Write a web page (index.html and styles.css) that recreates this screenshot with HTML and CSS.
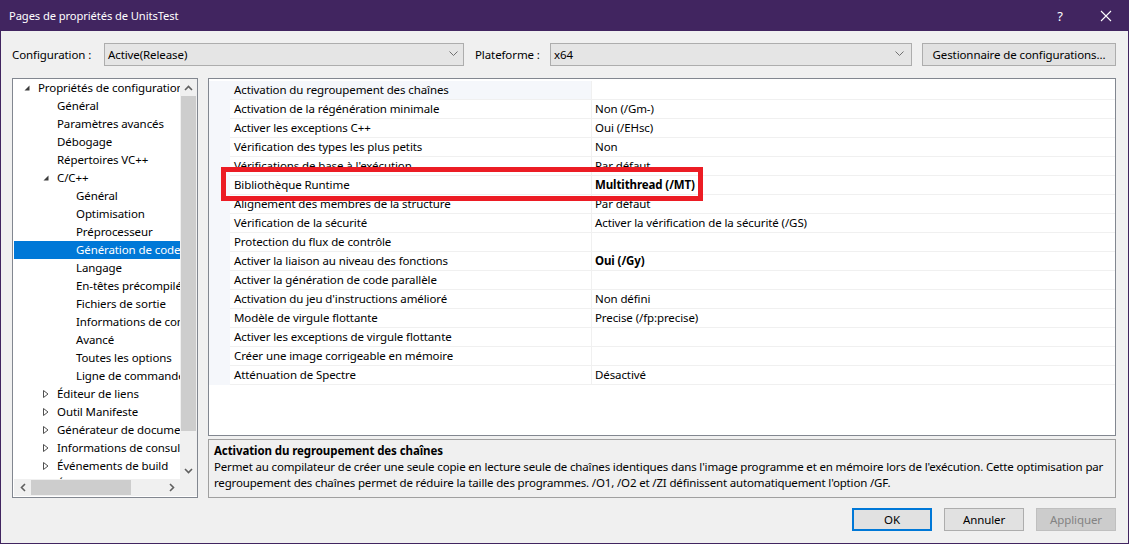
FILE: index.html
```html
<!DOCTYPE html>
<html lang="fr">
<head>
<meta charset="utf-8">
<title>Pages de propriétés de UnitsTest</title>
<link rel="stylesheet" href="styles.css">
</head>
<body>
<div class="window">
  <div class="titlebar">
    <span class="title">Pages de propriétés de UnitsTest</span>
    <span class="tb-btn">?</span>
    <span class="tb-btn"><svg width="12" height="12" viewBox="0 0 12 12"><path d="M1 1L11 11M11 1L1 11" stroke="#fff" stroke-width="1.1" fill="none"/></svg></span>
  </div>
  <div class="content">
    <div class="config-row">
      <span class="lbl lbl-config">Configuration :</span>
      <div class="combo combo-config"><span class="combo-text">Active(Release)</span><svg class="chev" width="9" height="5" viewBox="0 0 9 5"><path d="M0.5 0.5L4.5 4.5L8.5 0.5" stroke="#707070" fill="none"/></svg></div>
      <span class="lbl lbl-plat">Plateforme :</span>
      <div class="combo combo-plat"><span class="combo-text">x64</span><svg class="chev" width="9" height="5" viewBox="0 0 9 5"><path d="M0.5 0.5L4.5 4.5L8.5 0.5" stroke="#707070" fill="none"/></svg></div>
      <button class="btn btn-manager">Gestionnaire de configurations...</button>
    </div>
    <div class="main">
      <div class="tree-box">
        <ul class="tree">
          <li class="node l0"><span class="twisty"><svg width="6" height="6" viewBox="0 0 6 6"><path d="M5.5 0.5V5.5H0.5Z" fill="#3c3c3c"/></svg></span>Propriétés de configuration</li>
          <li class="node l1"><span class="twisty"></span>Général</li>
          <li class="node l1"><span class="twisty"></span>Paramètres avancés</li>
          <li class="node l1"><span class="twisty"></span>Débogage</li>
          <li class="node l1"><span class="twisty"></span>Répertoires VC++</li>
          <li class="node l1"><span class="twisty"><svg width="6" height="6" viewBox="0 0 6 6"><path d="M5.5 0.5V5.5H0.5Z" fill="#3c3c3c"/></svg></span>C/C++</li>
          <li class="node l2"><span class="twisty"></span>Général</li>
          <li class="node l2"><span class="twisty"></span>Optimisation</li>
          <li class="node l2"><span class="twisty"></span>Préprocesseur</li>
          <li class="node l2 selected"><span class="twisty"></span>Génération de code</li>
          <li class="node l2"><span class="twisty"></span>Langage</li>
          <li class="node l2"><span class="twisty"></span>En-têtes précompilés</li>
          <li class="node l2"><span class="twisty"></span>Fichiers de sortie</li>
          <li class="node l2"><span class="twisty"></span>Informations de consultation</li>
          <li class="node l2"><span class="twisty"></span>Avancé</li>
          <li class="node l2"><span class="twisty"></span>Toutes les options</li>
          <li class="node l2"><span class="twisty"></span>Ligne de commande</li>
          <li class="node l1"><span class="twisty"><svg width="6" height="8" viewBox="0 0 6 8"><path d="M0.5 0.5L5 4L0.5 7.5Z" stroke="#505050" fill="none"/></svg></span>Éditeur de liens</li>
          <li class="node l1"><span class="twisty"><svg width="6" height="8" viewBox="0 0 6 8"><path d="M0.5 0.5L5 4L0.5 7.5Z" stroke="#505050" fill="none"/></svg></span>Outil Manifeste</li>
          <li class="node l1"><span class="twisty"><svg width="6" height="8" viewBox="0 0 6 8"><path d="M0.5 0.5L5 4L0.5 7.5Z" stroke="#505050" fill="none"/></svg></span>Générateur de documents XML</li>
          <li class="node l1"><span class="twisty"><svg width="6" height="8" viewBox="0 0 6 8"><path d="M0.5 0.5L5 4L0.5 7.5Z" stroke="#505050" fill="none"/></svg></span>Informations de consultation</li>
          <li class="node l1"><span class="twisty"><svg width="6" height="8" viewBox="0 0 6 8"><path d="M0.5 0.5L5 4L0.5 7.5Z" stroke="#505050" fill="none"/></svg></span>Événements de build</li>
          <li class="node l1"><span class="twisty"><svg width="6" height="8" viewBox="0 0 6 8"><path d="M0.5 0.5L5 4L0.5 7.5Z" stroke="#505050" fill="none"/></svg></span>Étape de build personnalisée</li>
        </ul>
        <div class="vscroll">
          <div class="sb-arrow"><svg width="9" height="6" viewBox="0 0 9 6"><path d="M1 5L4.5 1.5L8 5" stroke="#606060" stroke-width="1.6" fill="none"/></svg></div>
          <div class="vtrack"><div class="vthumb"></div></div>
          <div class="sb-arrow"><svg width="9" height="6" viewBox="0 0 9 6"><path d="M1 1L4.5 4.5L8 1" stroke="#606060" stroke-width="1.6" fill="none"/></svg></div>
        </div>
        <div class="hscroll">
          <div class="sb-arrow"><svg width="6" height="9" viewBox="0 0 6 9"><path d="M5 1L1.5 4.5L5 8" stroke="#606060" stroke-width="1.6" fill="none"/></svg></div>
          <div class="htrack"><div class="hthumb"></div></div>
          <div class="sb-arrow"><svg width="6" height="9" viewBox="0 0 6 9"><path d="M1 1L4.5 4.5L1 8" stroke="#606060" stroke-width="1.6" fill="none"/></svg></div>
        </div>
        <div class="corner"></div>
      </div>
      <div class="right">
        <div class="grid">
          <div class="row current"><span class="gutter"></span><span class="name">Activation du regroupement des chaînes</span><span class="value"></span></div>
          <div class="row"><span class="gutter"></span><span class="name">Activation de la régénération minimale</span><span class="value">Non (/Gm-)</span></div>
          <div class="row"><span class="gutter"></span><span class="name">Activer les exceptions C++</span><span class="value">Oui (/EHsc)</span></div>
          <div class="row"><span class="gutter"></span><span class="name">Vérification des types les plus petits</span><span class="value">Non</span></div>
          <div class="row"><span class="gutter"></span><span class="name">Vérifications de base à l'exécution</span><span class="value">Par défaut</span></div>
          <div class="row"><span class="gutter"></span><span class="name">Bibliothèque Runtime</span><span class="value bold">Multithread (/MT)</span></div>
          <div class="row"><span class="gutter"></span><span class="name">Alignement des membres de la structure</span><span class="value">Par défaut</span></div>
          <div class="row"><span class="gutter"></span><span class="name">Vérification de la sécurité</span><span class="value">Activer la vérification de la sécurité (/GS)</span></div>
          <div class="row"><span class="gutter"></span><span class="name">Protection du flux de contrôle</span><span class="value"></span></div>
          <div class="row"><span class="gutter"></span><span class="name">Activer la liaison au niveau des fonctions</span><span class="value bold">Oui (/Gy)</span></div>
          <div class="row"><span class="gutter"></span><span class="name">Activer la génération de code parallèle</span><span class="value"></span></div>
          <div class="row"><span class="gutter"></span><span class="name">Activation du jeu d'instructions amélioré</span><span class="value">Non défini</span></div>
          <div class="row"><span class="gutter"></span><span class="name">Modèle de virgule flottante</span><span class="value">Precise (/fp:precise)</span></div>
          <div class="row"><span class="gutter"></span><span class="name">Activer les exceptions de virgule flottante</span><span class="value"></span></div>
          <div class="row"><span class="gutter"></span><span class="name">Créer une image corrigeable en mémoire</span><span class="value"></span></div>
          <div class="row"><span class="gutter"></span><span class="name">Atténuation de Spectre</span><span class="value">Désactivé</span></div>
          <div class="highlight"></div>
        </div>
        <div class="desc">
          <div class="desc-title">Activation du regroupement des chaînes</div>
          <div class="desc-text">Permet au compilateur de créer une seule copie en lecture seule de chaînes identiques dans l'image programme et en mémoire lors de l'exécution. Cette optimisation par regroupement des chaînes permet de réduire la taille des programmes. /O1, /O2 et /ZI définissent automatiquement l'option /GF.</div>
        </div>
      </div>
    </div>
    <div class="buttons">
      <button class="btn btn-dlg btn-default">OK</button>
      <button class="btn btn-dlg">Annuler</button>
      <button class="btn btn-dlg btn-disabled">Appliquer</button>
    </div>
  </div>
</div>
</body>
</html>
```
FILE: styles.css
```css
* { box-sizing: border-box; margin: 0; padding: 0; }
html, body { width: 1129px; height: 544px; overflow: hidden; }
body {
  font-family: "Noto Sans", "DejaVu Sans", sans-serif;
  font-size: 11.5px;
  letter-spacing: -0.1px;
  color: #000;
  background: #f0f0f0;
}
.window {
  width: 1129px;
  height: 544px;
  border: 1px solid #412560;
  border-top: 0;
  background: #f0f0f0;
  display: flex;
  flex-direction: column;
}
.titlebar {
  height: 31px;
  margin: 0 -1px;
  background: #412560;
  color: #fff;
  display: flex;
  align-items: center;
  padding-left: 9px;
  font-size: 11.2px;
}
.title { flex: 1; }
.tb-btn {
  width: 46px;
  height: 31px;
  display: flex;
  align-items: center;
  justify-content: center;
  font-size: 13px;
}
.content { padding: 0 12px 0 11px; display: flex; flex-direction: column; }

.config-row {
  margin-top: 11px;
  height: 24px;
  display: flex;
  align-items: center;
}
.lbl { white-space: nowrap; }
.lbl-config { width: 92px; }
.lbl-plat { width: 75px; margin-left: 11px; }
.combo {
  height: 23px;
  border: 1px solid #adadad;
  background: #e5e5e5;
  display: flex;
  align-items: center;
  padding: 0 5px 0 3px;
}
.combo-text { flex: 1; }
.chev { display: block; margin-top: -2px; }
.combo-config { width: 360px; }
.combo-plat { width: 362px; padding-right: 7px; }
.btn {
  font-family: inherit;
  font-size: inherit;
  letter-spacing: inherit;
  color: #000;
  background: #e1e1e1;
  border: 1px solid #adadad;
  height: 23px;
}
.btn-manager { width: 194px; margin-left: auto; }

.main {
  margin-top: 12px;
  height: 420px;
  display: flex;
  gap: 10px;
}
.tree-box {
  width: 186px;
  border: 1px solid #828790;
  background: #fff;
  padding: 0 0 1px 1px;
  display: grid;
  grid-template-columns: 1fr 17px;
  grid-template-rows: 1fr 17px;
}
.tree {
  list-style: none;
  overflow: hidden;
}
.node {
  height: 18px;
  line-height: 18px;
  white-space: nowrap;
  display: flex;
  align-items: center;
}
.node.l0 { padding-left: 5px; }
.node.l1 { padding-left: 24px; }
.node.l2 { padding-left: 43px; }
.twisty {
  width: 19px;
  height: 18px;
  flex: none;
  display: flex;
  align-items: center;
  padding-left: 5px;
}
.node.selected { background: #0078d7; color: #fff; }

.vscroll {
  background: #f0f0f0;
  display: flex;
  flex-direction: column;
}
.sb-arrow {
  width: 17px;
  height: 17px;
  flex: none;
  display: flex;
  align-items: center;
  justify-content: center;
}
.vtrack { flex: 1; padding: 0 1px; }
.vthumb { height: 335px; background: #cdcdcd; }
.hscroll {
  background: #f0f0f0;
  display: flex;
}
.htrack { flex: 1; padding: 1px 0; }
.hthumb { width: 100px; height: 100%; background: #cdcdcd; }
.corner { background: #f0f0f0; }

.right {
  flex: 1;
  display: flex;
  flex-direction: column;
  gap: 3px;
}
.grid {
  position: relative;
  height: 358px;
  border: 1px solid #828790;
  background: #fff;
  padding-top: 2px;
}
.row {
  display: grid;
  grid-template-columns: 21px 361px 1fr;
  height: 19px;
}
.gutter { background: #f5f7fb; }
.name, .value {
  border-bottom: 1px solid #f0f0f0;
  line-height: 18px;
  white-space: nowrap;
  overflow: hidden;
}
.name { padding-left: 4px; }
.value { border-left: 1px solid #f0f0f0; padding-left: 3px; }
.row.current .name { background: #f5f7fb; }
.bold { font-weight: bold; }
.highlight {
  position: absolute;
  left: 12px;
  top: 88px;
  width: 482px;
  height: 34px;
  border: 5px solid #ec1c24;
}

.desc {
  height: 59px;
  border: 1px solid #a0a0a0;
  background: #f0f0f0;
  padding: 3px 3px 0 5px;
  line-height: 16px;
}
.desc-title { font-weight: bold; }
.desc-text { letter-spacing: -0.16px; }

.buttons {
  margin-top: 10px;
  display: flex;
  justify-content: flex-end;
  gap: 12px;
}
.btn-dlg { width: 80px; height: 23px; }
.btn-default { border: 2px solid #0078d7; }
.btn-disabled { background: #cccccc; border-color: #bfbfbf; color: #838383; }
```
